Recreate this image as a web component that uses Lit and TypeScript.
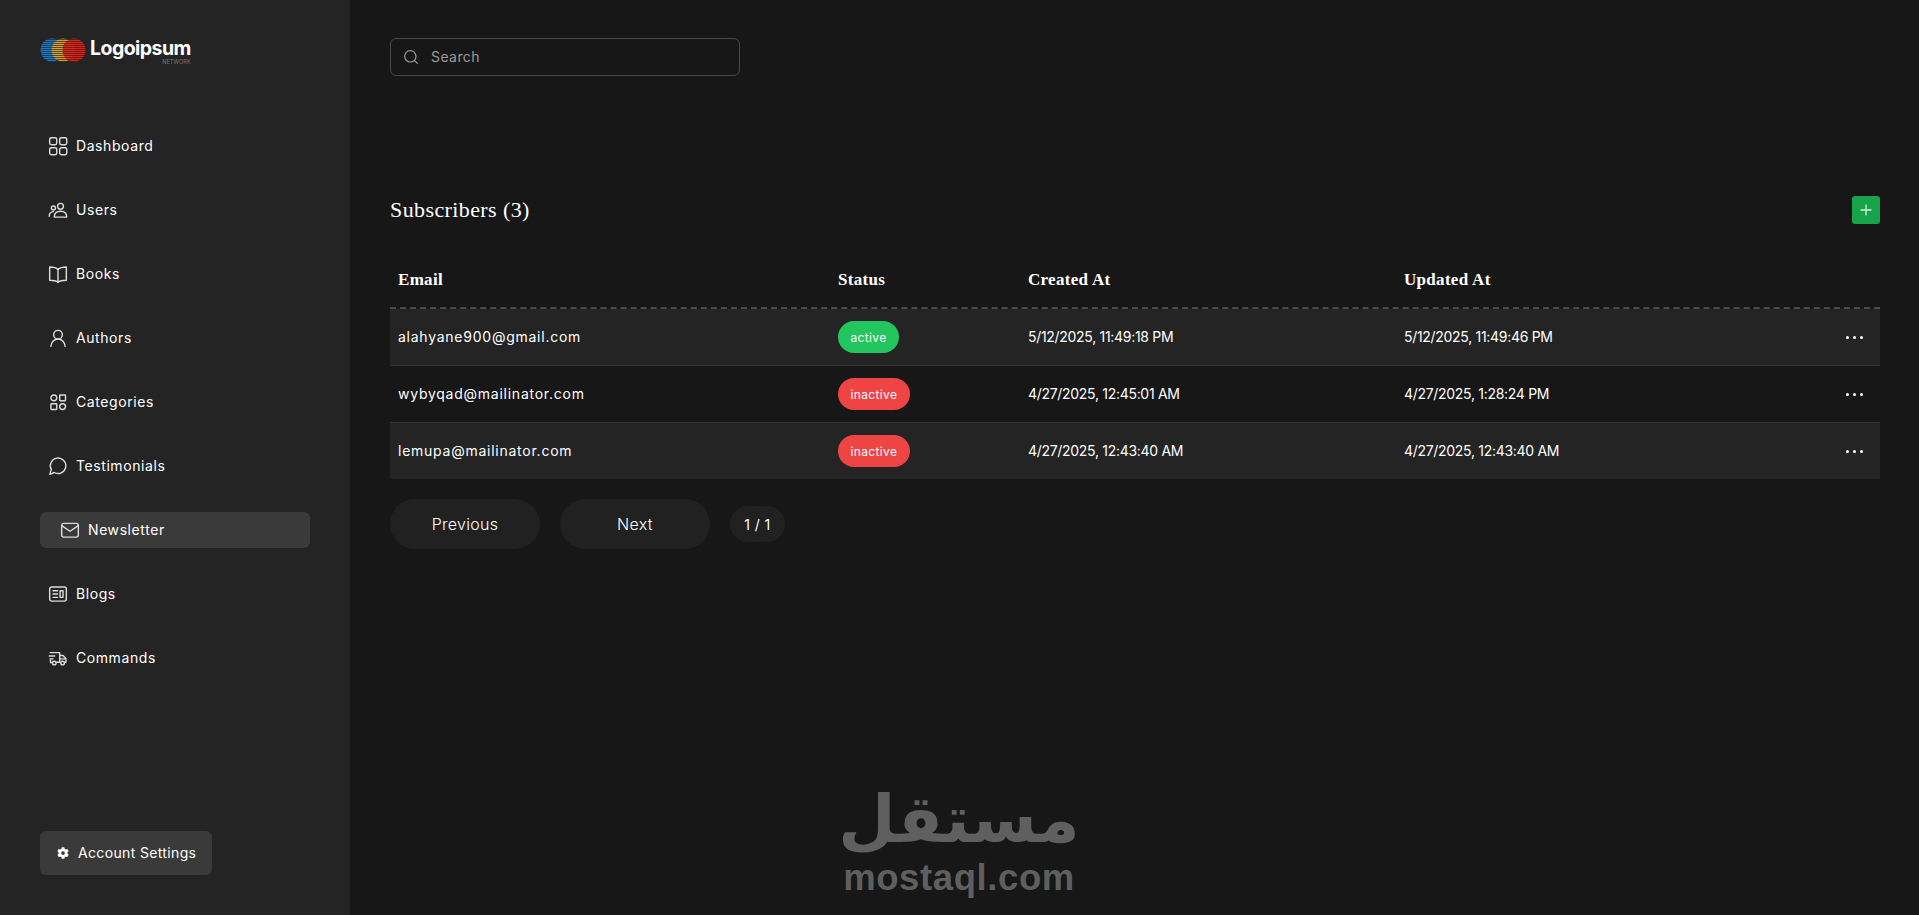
import { LitElement, html, css, svg } from "lit";
import { customElement } from "lit/decorators.js";

const ic = (body: unknown, size = 20) => html`<svg class="ic" width=${size} height=${size} viewBox="0 0 24 24" fill="none" stroke="currentColor" stroke-width="1.7" stroke-linecap="round" stroke-linejoin="round">${body}</svg>`;

const icons: Record<string, unknown> = {
  Dashboard: svg`<rect x="2" y="2" width="8.500" height="8.500" rx="2"/><rect x="14" y="2" width="8.500" height="8.500" rx="2"/><rect x="2" y="14" width="8.500" height="8.500" rx="2"/><rect x="14" y="14" width="8.500" height="8.500" rx="2"/>`,
  Users: svg`<circle cx="15" cy="7.500" r="3.500"/><path d="M7.500 20.500c0-4.500 3-7 7.500-7s7.500 2.500 7.500 7z"/><circle cx="6.500" cy="9.500" r="2.400"/><path d="M1.500 19.500c0-3.500 1.800-5.300 5-5.500"/>`,
  Books: svg`<path d="M12 6.500C10 4.500 6.500 3.500 2 3.500v16c4.500 0 8 .8 10 2.500 2-1.700 5.500-2.500 10-2.500v-16c-4.500 0-8 1-10 3z"/><path d="M12 6.500V22"/>`,
  Authors: svg`<circle cx="12" cy="8" r="5.200"/><path d="M3.500 22c.5-5 4-8.800 8.500-8.800s8 3.800 8.500 8.800"/>`,
  Categories: svg`<circle cx="7" cy="7" r="3.500"/><rect x="14" y="3.500" width="7" height="7" rx=".8"/><rect x="3.500" y="14" width="7" height="7" rx=".8"/><circle cx="17.500" cy="17.500" r="3.500"/>`,
  Testimonials: svg`<path d="M7.500 19.800A9.300 9.300 0 1 0 4 16.300L2.200 22z"/>`,
  Newsletter: svg`<rect x="2" y="4" width="20" height="16.500" rx="2.500"/><path d="M2.500 7l9.500 6.500L21.500 7"/>`,
  Blogs: svg`<rect x="2" y="3.500" width="20" height="17" rx="2.500"/><path d="M6 8h5.500M6 12h5.500M6 16h5.500"/><rect x="14.500" y="8" width="3.500" height="8"/>`,
  Commands: svg`<path d="M2.500 5.500H14V17H10"/><path d="M14 9h4l3.500 4v4H20"/><path d="M14 13h7"/><path d="M1.500 9.500H8M2.500 13H6"/><circle cx="7.500" cy="18" r="2.200"/><circle cx="17.500" cy="18" r="2.200"/><path d="M3 14v3.500h2"/>`,
};

const nav = ["Dashboard", "Users", "Books", "Authors", "Categories", "Testimonials", "Newsletter", "Blogs", "Commands"];

const rows = [
  { email: "alahyane900@gmail.com", status: "active", created: "5/12/2025, 11:49:18 PM", updated: "5/12/2025, 11:49:46 PM" },
  { email: "wybyqad@mailinator.com", status: "inactive", created: "4/27/2025, 12:45:01 AM", updated: "4/27/2025, 1:28:24 PM" },
  { email: "lemupa@mailinator.com", status: "inactive", created: "4/27/2025, 12:43:40 AM", updated: "4/27/2025, 12:43:40 AM" },
];

const logo = () => {
  const lines = [];
  for (let y = 1; y < 24; y += 2) lines.push(svg`<rect x="0" y=${y} width="46" height="1" fill="#242424" opacity=".7"/>`);
  return html`<svg class="mark" width="46" height="24" viewBox="0 0 46 24">
    <circle cx="12" cy="12" r="11.500" fill="#1a7ad0"/>
    <circle cx="23" cy="12" r="11.500" fill="#f5ab1e" opacity=".85"/>
    <circle cx="34" cy="12" r="11.500" fill="#fa1c10" opacity=".95"/>
    ${lines}
  </svg>`;
};

@customElement("app-root")
export class AppRoot extends LitElement {
  static styles = css`
    :host { display: block; height: 915px; overflow: hidden; font-family: Inter, "Noto Sans", sans-serif; color: #fff; position: relative; }
    .page { display: flex; height: 915px; background: #171717; }
    aside { width: 350px; flex: none; background: #242424; box-sizing: border-box; padding: 38px 40px 40px; display: flex; flex-direction: column; }
    .logo { display: flex; align-items: flex-start; gap: 4px; height: 26px; margin-bottom: 64px; }
    .mark { flex: none; }
    .brand { display: flex; flex-direction: column; align-items: flex-end; margin-top: -1px; }
    .brand b { font-size: 19.500px; line-height: 22px; font-weight: 700; letter-spacing: -.55px; }
    .brand span { font-size: 5.500px; line-height: 6px; color: #777; letter-spacing: .1px; }
    nav { display: flex; flex-direction: column; gap: 28px; }
    .item { display: flex; align-items: center; gap: 8px; height: 36px; width: 270px; padding-left: 8px; box-sizing: border-box; font-size: 14px; font-weight: 400; letter-spacing: .58px; border-radius: 6px; color: #fff; }
    .item span { margin-bottom: 2px; }
    .item .ic { color: #dcdcdc; flex: none; }
    .item.on { background: #3a3a3a; padding-left: 20px; }
    .account { margin-top: auto; align-self: flex-start; display: flex; align-items: center; gap: 9px; height: 44px; width: 172px; padding-left: 17px; box-sizing: border-box; background: #3a3a3a; border-radius: 6px; font-size: 14px; font-weight: 400; letter-spacing: .35px; }
    .account span { margin-bottom: 2px; }
    main { flex: 1; min-width: 0; padding: 38px 39px 0 40px; }
    .search { width: 350px; height: 38px; box-sizing: border-box; border: 1px solid #484848; border-radius: 6px; display: flex; align-items: center; gap: 12px; padding-left: 12px; color: #9a9a9a; font-size: 14px; letter-spacing: .42px; }
    .search span { margin-bottom: 2px; }
    .head { display: flex; justify-content: space-between; align-items: center; margin-top: 120px; height: 28px; }
    h1 { margin: 0; font: 400 22px "Liberation Serif", serif; letter-spacing: .4px; }
    .plus { width: 28px; height: 28px; background: #16a34a; border-radius: 3px; display: flex; align-items: center; justify-content: center; color: #d8efe0; }
    .row { display: grid; grid-template-columns: 440px 190px 376px 1fr auto; align-items: center; }
    .row > div { padding-left: 8px; }
    .thead { height: 57px; margin-top: 28px; border-bottom: 2px dashed #4a4a4a; box-sizing: border-box; font: 700 17px "Liberation Serif", serif; letter-spacing: .3px; padding-top: 1px; }
    .tr { height: 57px; box-sizing: border-box; border-bottom: 1px solid #333; font-size: 14px; font-weight: 400; letter-spacing: .75px; }
    .tr > div:first-child { padding-bottom: 1px; }
    .tr:nth-child(odd) { background: #242424; }
    .tr:last-child { border-bottom: none; height: 56px; }
    .tr > .date { letter-spacing: -.3px; padding-bottom: 1px; }
    .badge { display: inline-flex; align-items: center; height: 32px; padding: 0 12.500px; border-radius: 16px; font-size: 12px; font-weight: 400; letter-spacing: .35px; box-sizing: border-box; }
    .active { background: #22c55e; }
    .inactive { background: #ef4444; }
    .row > .dots { display: flex; gap: 4px; padding-right: 17px; }
    .dots i { width: 3px; height: 3px; border-radius: 50%; background: #fff; }
    .pager { display: flex; align-items: center; gap: 20px; margin-top: 20px; }
    .btn { width: 150px; height: 50px; border-radius: 25px; background: #212121; display: flex; align-items: center; justify-content: center; font-size: 16px; font-weight: 300; letter-spacing: .3px; }
    .count { width: 55px; height: 36px; border-radius: 18px; background: #212121; display: flex; align-items: center; justify-content: center; font-size: 14px; letter-spacing: .4px; }
    .mark-wm { position: absolute; left: 834px; top: 776px; width: 250px; display: flex; flex-direction: column; align-items: center; color: #5f5f5f; pointer-events: none; }
    .mark-wm .ar { font: 700 66px/88px "DejaVu Sans", sans-serif; }
    .mark-wm .en { font: 700 36.500px/36px "Liberation Sans", sans-serif; letter-spacing: .6px; margin-top: -4px; }
  `;

  render() {
    return html`<div class="page">
      <aside>
        <div class="logo">${logo()}<div class="brand"><b>Logoipsum</b><span>NETWORK</span></div></div>
        <nav>
          ${nav.map((n) => html`<div class="item ${n === "Newsletter" ? "on" : ""}">${ic(icons[n])}<span>${n}</span></div>`)}
        </nav>
        <div class="account">
          <svg width="12" height="12" viewBox="0 0 512 512" fill="#fff"><path d="M487 316l-42-25c4-23 4-47 0-70l42-25c5-3 7-9 5-14-11-35-29-66-54-93-4-4-10-5-15-2l-42 25c-18-15-38-27-60-35V28c0-6-4-11-9-12-36-8-74-8-109 0-6 1-10 6-10 12v49c-22 8-42 20-60 35L91 87c-5-3-11-2-15 2-25 27-43 58-54 93-2 5 0 11 5 14l42 25c-4 23-4 47 0 70l-42 25c-5 3-7 9-5 14 11 35 29 66 54 93 4 4 10 5 15 2l42-25c18 15 38 27 60 35v49c0 6 4 11 10 12 36 8 74 8 109 0 5-1 9-6 9-12v-49c22-8 42-20 60-35l42 25c5 3 11 2 15-2 25-27 43-58 54-93 2-5 0-11-5-14zM256 336a80 80 0 1 1 0-160 80 80 0 0 1 0 160z"/></svg>
          <span>Account Settings</span>
        </div>
      </aside>
      <main>
        <div class="search">
          <svg width="16" height="16" viewBox="0 0 24 24" fill="none" stroke="currentColor" stroke-width="1.800" stroke-linecap="round"><circle cx="11" cy="11" r="8.500"/><path d="M21.500 21.500l-4.500-4.500"/></svg>
          <span>Search</span>
        </div>
        <div class="head">
          <h1>Subscribers (3)</h1>
          <div class="plus"><svg width="16" height="16" viewBox="0 0 16 16" fill="none" stroke="currentColor" stroke-width="1.300"><path d="M8 2.500v11M2.500 8h11"/></svg></div>
        </div>
        <div class="thead row"><div>Email</div><div>Status</div><div>Created At</div><div>Updated At</div></div>
        <div class="tbody">
          ${rows.map((r) => html`<div class="tr row">
            <div>${r.email}</div>
            <div><span class="badge ${r.status}">${r.status}</span></div>
            <div class="date">${r.created}</div>
            <div class="date">${r.updated}</div>
            <div class="dots"><i></i><i></i><i></i></div>
          </div>`)}
        </div>
        <div class="pager"><div class="btn">Previous</div><div class="btn">Next</div><div class="count">1 / 1</div></div>
      </main>
      <div class="mark-wm"><div class="ar" dir="rtl" lang="ar">مستقل</div><div class="en">mostaql.com</div></div>
    </div>`;
  }
}
